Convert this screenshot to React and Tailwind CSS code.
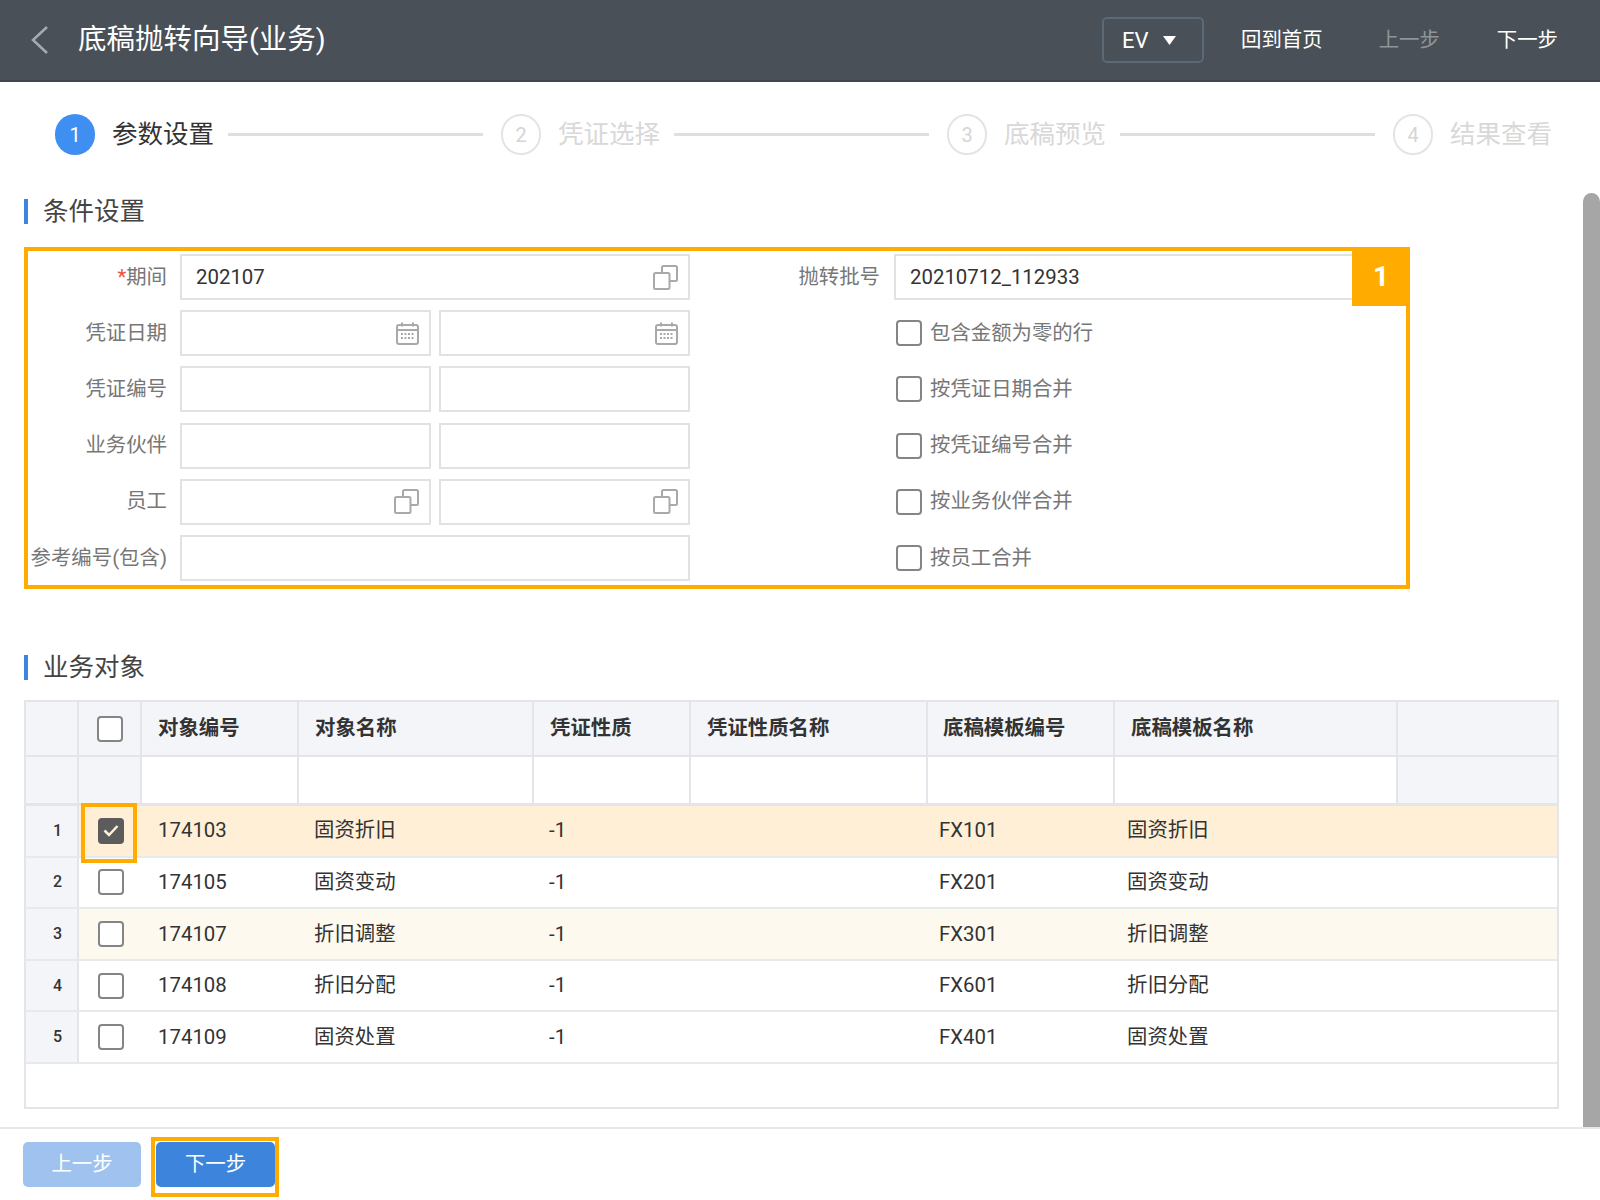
import React from "react";

const steps = ["参数设置", "凭证选择", "底稿预览", "结果查看"];

const rightChecks = ["包含金额为零的行", "按凭证日期合并", "按凭证编号合并", "按业务伙伴合并", "按员工合并"];

const rows = [
  { no: 1, code: "174103", name: "固资折旧", nature: "-1", tpl: "FX101", tplName: "固资折旧", bg: "bg-[#feefd6]", checked: true },
  { no: 2, code: "174105", name: "固资变动", nature: "-1", tpl: "FX201", tplName: "固资变动", bg: "bg-white" },
  { no: 3, code: "174107", name: "折旧调整", nature: "-1", tpl: "FX301", tplName: "折旧调整", bg: "bg-[#fef9ef]" },
  { no: 4, code: "174108", name: "折旧分配", nature: "-1", tpl: "FX601", tplName: "折旧分配", bg: "bg-white" },
  { no: 5, code: "174109", name: "固资处置", nature: "-1", tpl: "FX401", tplName: "固资处置", bg: "bg-white" },
];

const CopyIcon = () => (
  <svg width="25" height="25" viewBox="0 0 25 25" fill="none" stroke="#a9a9a9" strokeWidth="2">
    <path d="M9 7V2.5a1.5 1.5 0 0 1 1.500-1.500h12a1.500 1.500 0 0 1 1.500 1.500v12a1.500 1.500 0 0 1-1.500 1.500H17" />
    <rect x="1" y="8" width="15.500" height="16" rx="1.500" />
  </svg>
);

const CalendarIcon = () => (
  <svg width="23" height="23" viewBox="0 0 23 23" fill="none" stroke="#a9a9a9" strokeWidth="2">
    <rect x="1" y="3" width="21" height="19" rx="2" />
    <path d="M1 8h21M6 0.500v4M17 0.500v4" />
    <path d="M5 12h13M5 16h13" strokeWidth="2" strokeDasharray="2 1.500" />
  </svg>
);

const Input = ({ value, icon, className = "" }) => (
  <div className={`h-[46px] border-2 border-[#e2e2e2] bg-white flex items-center justify-between pl-[14px] pr-[10px] text-[20.400px] text-[#333] ${className}`}>
    <span>{value}</span>
    {icon === "copy" && <CopyIcon />}
    {icon === "date" && <CalendarIcon />}
  </div>
);

const Check = ({ checked }) =>
  checked ? (
    <div className="w-[26px] h-[26px] rounded-[4px] bg-[#5c5c5c] flex items-center justify-center">
      <svg width="16" height="13" viewBox="0 0 16 13" fill="none" stroke="#fdf1dc" strokeWidth="2.500">
        <path d="M1.500 6.500l4.500 4.500 8.500-9" />
      </svg>
    </div>
  ) : (
    <div className="w-[26px] h-[26px] rounded-[4px] border-2 border-[#858585] bg-white" />
  );

const SectionTitle = ({ children, className = "" }) => (
  <div className={`flex items-center h-[25px] ml-[24px] ${className}`}>
    <div className="w-[4px] h-[25px] bg-[#3d85dc]" />
    <div className="ml-[15px] text-[25.500px] leading-[25px] text-[#444]">{children}</div>
  </div>
);

const Label = ({ children }) => (
  <div className="w-[143px] text-right text-[20.400px] text-[#777] whitespace-nowrap flex justify-end">{children}</div>
);

const leftRows = [
  { id: "period", label: <><span className="text-[#e8543f]">*</span>期间</>, full: true, value: "202107", icon: "copy" },
  { id: "date", label: "凭证日期", icon: "date" },
  { id: "no", label: "凭证编号" },
  { id: "partner", label: "业务伙伴" },
  { id: "staff", label: "员工", icon: "copy" },
  { id: "ref", label: "参考编号(包含)", full: true },
];

const gridCols = "grid grid-cols-[53px_63px_157px_235px_157px_237px_187px_283px_159px]";

export default function App() {
  return (
    <div className="relative w-[1600px] h-[1200px] overflow-hidden bg-white font-[Roboto,'Noto_Sans_CJK_SC',sans-serif]">
      {/* top bar */}
      <div className="h-[82px] bg-[#495057] border-b-2 border-b-[#41474e] flex items-center pr-[42px]">
        <svg className="ml-[30px]" width="20" height="30" viewBox="0 0 20 30" fill="none" stroke="#a6abb0" strokeWidth="2.500">
          <path d="M17 2L3 15l14 13" />
        </svg>
        <div className="ml-[28px] text-[28.500px] text-white">底稿抛转向导(业务)</div>
        <div className="ml-auto shrink-0 w-[102px] h-[46px] rounded-[5px] border-2 border-[#5b6875] flex items-center pl-[18px] gap-[14px] text-[22px] text-white">
          <span>EV</span>
          <svg width="13" height="9" viewBox="0 0 13 9" fill="#fff">
            <path d="M0 0h13L6.500 9z" />
          </svg>
        </div>
        <div className="ml-[37px] text-[20.400px] text-white">回到首页</div>
        <div className="ml-[56px] text-[20.400px] text-[#8f959b]">上一步</div>
        <div className="ml-[57px] text-[20.400px] text-white">下一步</div>
      </div>

      {/* steps */}
      <div className="flex items-center mt-[32px] h-[41px] pl-[55px] pr-[50px]">
        {steps.map((s, i) => (
          <React.Fragment key={s}>
            <div
              className={`w-[40px] h-[41px] rounded-full flex items-center justify-center text-[20px] ${
                i === 0 ? "bg-[#3f8ff2] text-white" : "border-2 border-[#e4e4e4] text-[#d5d5d5]"
              }`}
            >
              {i + 1}
            </div>
            <div className={`ml-[17px] w-[100px] text-[25.500px] whitespace-nowrap ${i === 0 ? "text-[#333]" : "text-[#d8d8d8]"}`}>{s}</div>
            {i < 3 && <div className="flex-1 h-[3px] bg-[#dfdfdf] ml-[16px] mr-[18px]" />}
          </React.Fragment>
        ))}
      </div>

      <SectionTitle className="mt-[44px]">条件设置</SectionTitle>

      {/* form */}
      <div className="relative mt-[30px] ml-[24px] h-[328px] flex">
        <div className="w-[666px] flex flex-col gap-y-[10.200px]">
          {leftRows.map((r) => (
            <div key={r.id} className="flex items-center h-[46px]">
              <Label>{r.label}</Label>
              <div className="ml-[13px] flex-1 flex gap-[8px]">
                {r.full ? (
                  <Input value={r.value} icon={r.icon} className="flex-1" />
                ) : (
                  <>
                    <Input icon={r.icon} className="w-[251px]" />
                    <Input icon={r.icon} className="w-[251px]" />
                  </>
                )}
              </div>
            </div>
          ))}
        </div>
        <div className="ml-[104px] flex flex-col gap-y-[10.200px]">
          <div className="flex items-center h-[46px]">
            <div className="w-[86px] text-right text-[20.400px] text-[#777] whitespace-nowrap">抛转批号</div>
            <Input value="20210712_112933" className="ml-[14px] w-[490px] pl-[14px]" />
          </div>
          {rightChecks.map((c) => (
            <div key={c} className="flex items-center h-[46px] pl-[102px]">
              <Check />
              <span className="ml-[8px] text-[20.400px] text-[#777]">{c}</span>
            </div>
          ))}
        </div>
        {/* orange callout */}
        <div className="absolute left-0 top-[-7px] w-[1386px] h-[342px] border-4 border-[#ffab00] pointer-events-none" />
        <div className="absolute left-[1328px] top-[-7px] w-[58px] h-[59px] bg-[#ffab00] flex items-center justify-center text-[28px] font-bold text-white">1</div>
      </div>

      <SectionTitle className="mt-[73px]">业务对象</SectionTitle>

      {/* table */}
      <div className="relative mt-[20px] ml-[24px] w-[1535px] h-[409px] border-2 border-[#e3e5ea] text-[20.400px] text-[#333]">
        <div className={`${gridCols} h-[55px] bg-[#f3f5f9] border-b-2 border-[#e3e5ea] font-bold`}>
          <div className="border-r-2 border-[#e3e5ea]" />
          <div className="border-r-2 border-[#e3e5ea] flex items-center justify-center"><Check /></div>
          <div className="border-r-2 border-[#e3e5ea] flex items-center pl-[16px]">对象编号</div>
          <div className="border-r-2 border-[#e3e5ea] flex items-center pl-[16px]">对象名称</div>
          <div className="border-r-2 border-[#e3e5ea] flex items-center pl-[16px]">凭证性质</div>
          <div className="border-r-2 border-[#e3e5ea] flex items-center pl-[16px]">凭证性质名称</div>
          <div className="border-r-2 border-[#e3e5ea] flex items-center pl-[15px]">底稿模板编号</div>
          <div className="border-r-2 border-[#e3e5ea] flex items-center pl-[16px]">底稿模板名称</div>
          <div />
        </div>
        <div className={`${gridCols} h-[49px] border-b-[3px] border-[#e3e5ea]`}>
          <div className="bg-[#f3f5f9] border-r-2 border-[#e3e5ea]" />
          <div className="bg-[#f3f5f9] border-r-2 border-[#e3e5ea]" />
          <div className="border-r-2 border-[#e3e5ea]" />
          <div className="border-r-2 border-[#e3e5ea]" />
          <div className="border-r-2 border-[#e3e5ea]" />
          <div className="border-r-2 border-[#e3e5ea]" />
          <div className="border-r-2 border-[#e3e5ea]" />
          <div className="border-r-2 border-[#e3e5ea]" />
          <div className="bg-[#f3f5f9]" />
        </div>
        {rows.map((r) => (
          <div key={r.no} className={`${gridCols} h-[51.600px] border-b-2 border-[#e8e9ed] ${r.bg}`}>
            <div className="bg-[#f3f5f9] border-r-2 border-[#e3e5ea] flex items-center justify-end pr-[15px] text-[16px] font-medium">{r.no}</div>
            <div className="flex items-center justify-center"><Check checked={r.checked} /></div>
            <div className="flex items-center pl-[16px]">{r.code}</div>
            <div className="flex items-center pl-[15px]">{r.name}</div>
            <div className="flex items-center pl-[15px]">{r.nature}</div>
            <div />
            <div className="flex items-center pl-[11px]">{r.tpl}</div>
            <div className="flex items-center pl-[12px]">{r.tplName}</div>
            <div />
          </div>
        ))}
        <div className="absolute left-[55px] top-[101px] w-[56px] h-[60px] border-4 border-[#ffab00] pointer-events-none" />
      </div>

      {/* footer */}
      <div className="mt-[18px] border-t-2 border-[#e8e8e8] pt-[13px] pl-[23px] flex items-start">
        <button className="w-[118px] h-[45px] rounded-[5px] bg-[#9fc3ee] text-[20.400px] text-white">上一步</button>
        <div className="ml-[10px] mt-[-5px] w-[128px] h-[60px] border-4 border-[#ffab00] pl-[1px] pt-[1px]">
          <button className="w-[119px] h-[45px] rounded-[5px] bg-[#3d85dc] text-[20.400px] text-white">下一步</button>
        </div>
      </div>

      {/* scrollbar thumb */}
      <div className="absolute left-[1583px] top-[193px] w-[17px] h-[934px] rounded-t-[9px] bg-[#a6a6a6]" />
    </div>
  );
}
